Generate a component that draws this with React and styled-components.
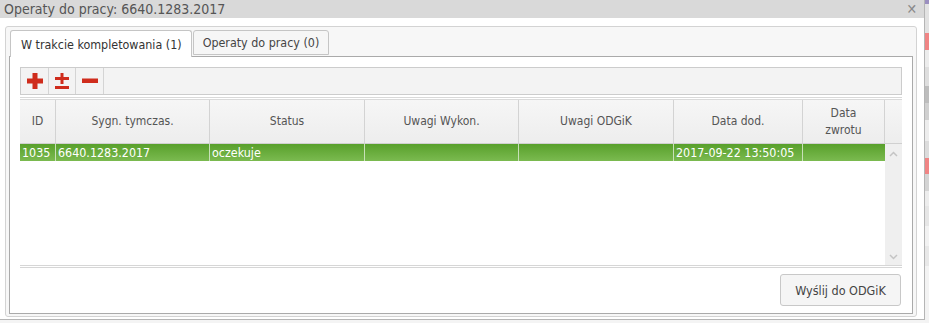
import React from "react";
import styled, { createGlobalStyle } from "styled-components";

const GlobalStyle = createGlobalStyle`
  html, body {
    margin: 0;
    padding: 0;
    background: #f4f4f4;
    overflow: hidden;
  }
  body {
    font-family: "DejaVu Sans", Verdana, sans-serif;
    font-stretch: condensed;
  }
`;

const PageStyles = styled.div`
  display: flex;
  width: 929px;
  height: 323px;
`;

const Dialog = styled.div`
  width: 925px;
  height: 320px;
  flex-shrink: 0;
  display: flex;
  flex-direction: column;
  background: #fff;
  border-right: 1px solid #b5b5b5;
  border-bottom: 1px solid #b5b5b5;
  box-sizing: border-box;
`;

const TitleBar = styled.div`
  height: 18px;
  display: flex;
  align-items: center;
  justify-content: space-between;
  padding: 0 7px 0 4px;
  background: #d9d9d9;
  color: #555;
  font-size: 14px;
  line-height: 18px;
  .close {
    color: #8a8a8a;
    font-size: 14px;
    line-height: 1;
  }
`;

const DialogBody = styled.div`
  flex: 1;
  padding: 8px 7px 2px 5px;
  display: flex;
  min-height: 0;
`;

const TabsPanel = styled.div`
  flex: 1;
  display: flex;
  flex-direction: column;
  padding: 3px 3px 2px 3px;
  background: #f7f7f7;
  border: 1px solid #d3d3d3;
  border-radius: 3px;
`;

const TabNav = styled.div`
  display: flex;
  gap: 1px;
  padding-left: 1px;
  height: 26px;
  position: relative;
  z-index: 1;
`;

const Tab = styled.div`
  height: ${(p) => (p.$active ? "27px" : "25px")};
  box-sizing: border-box;
  padding: 0 9px 0 ${(p) => (p.$active ? "10px" : "9px")};
  display: flex;
  align-items: center;
  font-size: 12.4px;
  color: ${(p) => (p.$active ? "#333" : "#454545")};
  background: ${(p) => (p.$active ? "#fff" : "#f6f6f6")};
  border: 1px solid #c5c5c5;
  border-bottom: ${(p) => (p.$active ? "none" : "1px solid #c5c5c5")};
  border-radius: 3px 3px 0 0;
`;

const TabContent = styled.div`
  flex: 1;
  display: flex;
  flex-direction: column;
  background: #fff;
  border: 1px solid #aaa;
  padding: 10px 10px 7px 10px;
`;

const Toolbar = styled.div`
  display: flex;
  height: 28px;
  box-sizing: border-box;
  background: #f3f3f3;
  border: 1px solid #ccc;
`;

const ToolButton = styled.div`
  width: ${(p) => p.$w}px;
  display: flex;
  align-items: center;
  justify-content: center;
  border-right: 1px solid #d4d4d4;
`;

const Grid = styled.div`
  margin-top: 2px;
  border-top: 3px double #d9d9d9;
  display: flex;
  flex-direction: column;
  height: 171px;
  border-bottom: 3px double #d6d6d6;
  box-sizing: border-box;
`;

const HeaderRow = styled.div`
  display: grid;
  grid-template-columns: ${(p) => p.$cols};
  height: 44px;
  box-sizing: border-box;
  background: linear-gradient(#f6f6f6, #ededed);
  border-bottom: 1px solid #d0d0d0;
`;

const HeaderCell = styled.div`
  display: flex;
  align-items: center;
  justify-content: center;
  text-align: center;
  font-size: 12px;
  line-height: 17px;
  color: #555;
  border-right: 1px solid #d3d3d3;
  &:last-child {
    border-right: none;
  }
`;

const GridBody = styled.div`
  flex: 1;
  display: grid;
  grid-template-columns: 1fr 17px;
  min-height: 0;
`;

const Rows = styled.div`
  display: flex;
  flex-direction: column;
`;

const DataRow = styled.div`
  display: grid;
  grid-template-columns: ${(p) => p.$cols};
  height: 17px;
  background: linear-gradient(#58a02b, #7bba50);
`;

const DataCell = styled.div`
  font-size: 12.4px;
  line-height: 17px;
  color: #fff;
  padding-left: 2px;
  white-space: nowrap;
  overflow: hidden;
  border-right: 1px solid #c8e0b8;
  &:last-child {
    border-right: none;
  }
`;

const Scrollbar = styled.div`
  background: #efefef;
  display: flex;
  flex-direction: column;
  justify-content: space-between;
  align-items: center;
  padding: 7px 0 5px;
`;

const Footer = styled.div`
  display: flex;
  justify-content: flex-end;
  padding-top: 6px;
  padding-right: 1px;
`;

const Button = styled.button`
  height: 32px;
  width: 121px;
  font-family: inherit;
  font-stretch: condensed;
  font-size: 12.5px;
  color: #444;
  background: #f5f5f5;
  border: 1px solid #c8c8c8;
  border-radius: 3px;
`;

const SideStrip = styled.div`
  flex: 1;
  display: flex;
  flex-direction: column;
`;

const Stripe = styled.div`
  height: ${(p) => p.$h}px;
  background: ${(p) => p.$c};
`;

const columns = ["36px", "154px", "155px", "154px", "155px", "129px", "82px", "17px"];
const cols = columns.join(" ");
const rowCols = columns.slice(0, 7).join(" ");

const headers = ["ID", "Sygn. tymczas.", "Status", "Uwagi Wykon.", "Uwagi ODGiK", "Data dod.", "Data\nzwrotu", ""];

const rows = [
  ["1035", "6640.1283.2017", "oczekuje", "", "", "2017-09-22 13:50:05", ""],
];

const stripes = [
  [4, "#9b8fc0"],
  [29, "#e2e2e2"],
  [17, "#f08585"],
  [17, "#ececec"],
  [19, "#dedede"],
  [17, "#bdbdbd"],
  [17, "#d0d0d0"],
  [21, "#ededed"],
  [17, "#dcdcdc"],
  [16, "#f08585"],
  [17, "#d4d4d4"],
  [15, "#ededed"],
  [20, "#e6e6e6"],
  [20, "#f2f2f2"],
  [20, "#e8e8e8"],
  [57, "#f3f3f3"],
];

const RED = "#cf2c1c";

const Plus = () => (
  <svg width="16" height="16" viewBox="0 0 16 16">
    <rect x="5.5" y="0" width="5" height="16" fill={RED} />
    <rect x="0" y="5.5" width="16" height="5" fill={RED} />
  </svg>
);

const PlusMinus = () => (
  <svg width="14" height="16" viewBox="0 0 14 16">
    <rect x="5.5" y="0" width="3" height="11" fill={RED} />
    <rect x="0" y="4" width="14" height="3" fill={RED} />
    <rect x="0" y="13" width="14" height="3" fill={RED} />
  </svg>
);

const Minus = () => (
  <svg width="16" height="16" viewBox="0 0 16 16">
    <rect x="0" y="5.5" width="16" height="4.5" fill={RED} />
  </svg>
);

const Chevron = ({ up }) => (
  <svg width="9" height="6" viewBox="0 0 9 6">
    <path
      d={up ? "M1 5 L4.5 1.5 L8 5" : "M1 1 L4.5 4.5 L8 1"}
      fill="none"
      stroke="#c4c4c4"
      strokeWidth="1.5"
    />
  </svg>
);

const App = () => {
  return (
    <PageStyles>
      <GlobalStyle />
      <Dialog>
        <TitleBar>
          <span>Operaty do pracy: 6640.1283.2017</span>
          <span className="close">✕</span>
        </TitleBar>
        <DialogBody>
          <TabsPanel>
            <TabNav>
              <Tab $active>W trakcie kompletowania (1)</Tab>
              <Tab>Operaty do pracy (0)</Tab>
            </TabNav>
            <TabContent>
              <Toolbar>
                <ToolButton $w={27}>
                  <Plus />
                </ToolButton>
                <ToolButton $w={26}>
                  <PlusMinus />
                </ToolButton>
                <ToolButton $w={27}>
                  <Minus />
                </ToolButton>
              </Toolbar>
              <Grid>
                <HeaderRow $cols={cols}>
                  {headers.map((h, i) => (
                    <HeaderCell key={i}>
                      {h.split("\n").map((line, j) => (
                        <React.Fragment key={j}>
                          {j > 0 && <br />}
                          {line}
                        </React.Fragment>
                      ))}
                    </HeaderCell>
                  ))}
                </HeaderRow>
                <GridBody>
                  <Rows>
                    {rows.map((r, i) => (
                      <DataRow key={i} $cols={rowCols}>
                        {r.map((c, j) => (
                          <DataCell key={j}>{c}</DataCell>
                        ))}
                      </DataRow>
                    ))}
                  </Rows>
                  <Scrollbar>
                    <Chevron up />
                    <Chevron />
                  </Scrollbar>
                </GridBody>
              </Grid>
              <Footer>
                <Button>Wyślij do ODGiK</Button>
              </Footer>
            </TabContent>
          </TabsPanel>
        </DialogBody>
      </Dialog>
      <SideStrip>
        {stripes.map(([h, c], i) => (
          <Stripe key={i} $h={h} $c={c} />
        ))}
      </SideStrip>
    </PageStyles>
  );
};

export default App;
